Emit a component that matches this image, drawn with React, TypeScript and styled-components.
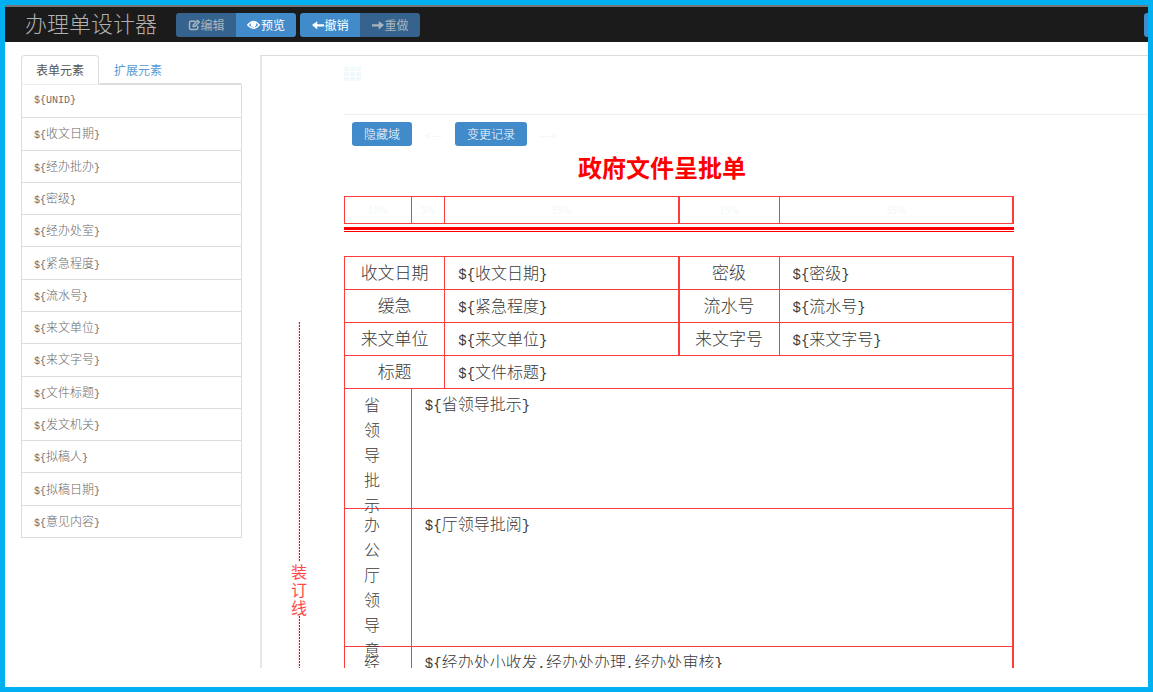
import React from "react";
import styled, { createGlobalStyle } from "styled-components";

const cjk = `"Noto Sans CJK SC", sans-serif`;
const red = "#ff3c3c";

const GlobalStyle = createGlobalStyle`
  * { box-sizing: border-box; }
  html, body, #root { height: 100%; margin: 0; }
  body { background: #fff; font-family: ${cjk}; font-size: 12px; color: #555; }
  button { font-family: inherit; margin: 0; cursor: pointer; }
`;

const Frame = styled.div`
  height: 100%;
  min-height: 320px;
  display: flex;
  flex-direction: column;
  border: 5px solid #00b0f0;
  overflow: hidden;
`;

const Header = styled.header`
  display: flex;
  flex: none;
  align-items: center;
  height: 37px;
  border-top: 2px solid #777;
  background: #1b1b1b;
`;

const Brand = styled.h1`
  margin: 0 19px 0 20px;
  padding-bottom: 4px;
  font-size: 22px;
  line-height: 31px;
  font-weight: 300;
  color: #b0b0b0;
  white-space: nowrap;
`;

const ButtonGroup = styled.div`
  display: flex;
  flex: none;
  margin-right: 4px;
  border-radius: 3px;
  overflow: hidden;
`;

const ToolButton = styled.button`
  display: flex;
  align-items: center;
  justify-content: center;
  gap: 1px;
  width: 60px;
  height: 24px;
  padding: 0;
  border: 0;
  background: #428bca;
  color: #fff;
  font-size: 12px;
  line-height: 16px;

  &:disabled { background: #35638d; color: #a9b4bf; cursor: default; }
`;

const CutOffGroup = styled(ButtonGroup)`
  width: 4px;
  margin: 0 0 0 auto;
  border-radius: 3px 0 0 3px;
`;

const Body = styled.div`
  flex: 1;
  min-height: 0;
  display: flex;
  gap: 18px;
  padding: 13px 0 19px 16px;
`;

const Sidebar = styled.aside`
  flex: none;
  width: 221px;
`;

const Tabs = styled.div`
  display: flex;
  height: 30px;
`;

const Tab = styled.button<{ $active?: boolean }>`
  flex: ${(p) => (p.$active ? "none" : "1")};
  width: 78px;
  padding: 0 ${(p) => (p.$active ? 0 : 14)}px;
  border: 1px solid ${(p) => (p.$active ? "#ddd" : "transparent")};
  border-bottom: ${(p) => (p.$active ? "1px solid #eee" : "2px solid #ddd")};
  border-radius: ${(p) => (p.$active ? "4px 4px 0 0" : "0")};
  background: #fff;
  color: ${(p) => (p.$active ? "#555" : "#5a9bd2")};
  font-size: 12px;
  line-height: 18px;
  text-align: ${(p) => (p.$active ? "center" : "left")};
`;

const ElementList = styled.ul`
  display: grid;
  grid-auto-rows: 1fr;
  height: 453px;
  margin: 0;
  padding: 0;
  list-style: none;
  border: 1px solid #ddd;
  border-top: 0;
`;

const ElementItem = styled.li`
  display: flex;
  align-items: center;
  padding: 0 0 1px 12px;
  color: #6a6a6a;
  border-top: 1px solid #ddd;

  &:first-child { border-top: 0; }
`;

const TokenText = styled.span<{ $large?: boolean }>`
  font-family: "Liberation Mono", ${cjk};
  font-size: ${(p) => (p.$large ? 14 : 10)}px;
  white-space: nowrap;
`;

const TokenName = styled.span<{ $large?: boolean }>`
  font-size: ${(p) => (p.$large ? 16 : 12)}px;
  font-weight: 300;
`;

const Canvas = styled.main`
  flex: 1;
  min-width: 0;
  display: flex;
  overflow: hidden;
  border-left: 2px solid #e8e8e8;
  border-top: 1px solid #ddd;
`;

const BindingMargin = styled.div`
  flex: none;
  display: flex;
  flex-direction: column;
  align-items: center;
  width: 74px;
  padding-top: 266px;
`;

const DottedLine = styled.div<{ $grow?: boolean }>`
  width: 2px;
  height: 240px;
  flex: ${(p) => (p.$grow ? "1" : "none")};
  border-left: 1px solid #ffe0e0;
  background: repeating-linear-gradient(#f00 0 2px, #fff 2px 3px);
`;

const BindingText = styled.div`
  flex: none;
  width: 17px;
  font-size: 16px;
  line-height: 18px;
  color: #ff4848;
  text-align: center;
`;

const Sheet = styled.div`
  flex: 1;
  min-width: 0;
  margin-left: 8px;
`;

const GridHandle = styled.div`
  height: 59px;
  padding-top: 11px;
  border-bottom: 1px solid #f0f0f0;

  svg { display: block; }
`;

const Actions = styled.div`
  display: flex;
  align-items: center;
  height: 24px;
  margin: 7px 0 8px 8px;
`;

const ActionButton = styled.button`
  height: 24px;
  padding: 0 12px;
  border: 0;
  border-radius: 3px;
  background: #428bca;
  color: #fff;
  font-size: 12px;
  font-weight: 300;
  line-height: 16px;
`;

const Arrow = styled.span`
  width: 43px;
  font-size: 12px;
  color: #f5f5f5;
  text-align: center;
`;

const Paper = styled.div`
  width: 100%;
  max-width: 670px;
`;

const FormTitle = styled.h2`
  margin: 0 0 16px;
  padding-right: 34px;
  font-size: 24px;
  line-height: 26px;
  font-weight: 700;
  color: #f00;
  text-align: center;
`;

const FormTable = styled.table`
  width: 100%;
  table-layout: fixed;
  border-collapse: collapse;
`;

const Col = styled.col<{ $share: number }>`
  width: ${(p) => p.$share}%;
`;

const Cell = styled.td<{ $heavy?: boolean }>`
  height: 33px;
  padding: 0 0 2px 13px;
  border: 1px solid ${red};
  border-right-width: ${(p) => (p.$heavy ? 2 : 1)}px;
  color: #3a3a3a;
`;

const HeadCell = styled(Cell)`
  height: 27px;
  padding: 0;
  font-size: 10px;
  line-height: 14px;
  color: #f2f8f8;
  text-align: center;
`;

const LabelCell = styled(Cell)`
  padding: 0 0 2px;
  font-size: 17px;
  line-height: 24px;
  font-weight: 300;
  text-align: center;
`;

const TallCell = styled(Cell)<{ $height: number }>`
  height: ${(p) => p.$height}px;
  padding-top: 4px;
  line-height: 24px;
  vertical-align: top;
`;

const TallLabelCell = styled(TallCell)`
  padding: 3px 0 0 19px;
`;

const VerticalText = styled.div<{ $height: number }>`
  width: 16px;
  height: ${(p) => p.$height}px;
  font-size: 16px;
  line-height: 25px;
  font-weight: 300;
`;

const DoubleRule = styled.div`
  height: 5px;
  margin: 3px 0 24px;
  border-top: 3px solid #f00;
  border-bottom: 1px solid #f00;
`;

const Token = ({ name, large }: { name: string; large?: boolean }) => (
  <TokenText $large={large}>
    {"${"}
    {name === "UNID"
      ? name
      : name.split(",").map((part, i) => (
          <React.Fragment key={part}>
            {i > 0 && ","}
            <TokenName $large={large}>{part}</TokenName>
          </React.Fragment>
        ))}
    {"}"}
  </TokenText>
);

const icon = { width: 12, height: 12, viewBox: "0 0 16 16", fill: "none", stroke: "currentColor" };

const EditIcon = () => (
  <svg {...icon} strokeWidth="2">
    <path d="M10 3H4Q2 3 2 5v7q0 2 2 2h7q2 0 2-2v-3" />
    <path d="M7 10V8l6-6 2 2-6 6z" />
  </svg>
);
const EyeIcon = () => (
  <svg {...icon} width={13} height={10} viewBox="0 0 18 14" strokeWidth="2">
    <path d="M1 7q8-10 16 0q-8 9-16 0z" />
    <circle cx="9" cy="6" r="3" fill="currentColor" />
  </svg>
);
const ArrowIcon = ({ right }: { right?: boolean }) => (
  <svg {...icon} fill="currentColor" stroke="none">
    <path d={right ? "M16 8 9 3v4H0v3h9v4z" : "M0 8 7 3v4h9v3H7v4z"} />
  </svg>
);

const elements = [
  "UNID", "收文日期", "经办批办", "密级", "经办处室", "紧急程度", "流水号",
  "来文单位", "来文字号", "文件标题", "发文机关", "拟稿人", "拟稿日期", "意见内容",
];

const shares = [10, 5, 35, 15, 35];

const pairs = [
  ["收文日期", "收文日期", "密级", "密级"],
  ["缓急", "紧急程度", "流水号", "流水号"],
  ["来文单位", "来文单位", "来文字号", "来文字号"],
];

const opinions = [
  { label: "省领导批示", token: "省领导批示", height: 120 },
  { label: "办公厅领导意", token: "厅领导批阅", height: 138 },
  { label: "经", token: "经办处小收发,经办处办理,经办处审核", height: 120 },
];

const Columns = () => (
  <colgroup>
    {shares.map((share, i) => (
      <Col key={i} $share={share} />
    ))}
  </colgroup>
);

export default function App() {
  return (
    <Frame>
      <GlobalStyle />
      <Header>
        <Brand>办理单设计器</Brand>
        <ButtonGroup>
          <ToolButton disabled><EditIcon />编辑</ToolButton>
          <ToolButton><EyeIcon />预览</ToolButton>
        </ButtonGroup>
        <ButtonGroup>
          <ToolButton><ArrowIcon />撤销</ToolButton>
          <ToolButton disabled><ArrowIcon right />重做</ToolButton>
        </ButtonGroup>
        <CutOffGroup>
          <ToolButton aria-label="更多" />
        </CutOffGroup>
      </Header>
      <Body>
        <Sidebar>
          <Tabs role="tablist">
            <Tab role="tab" aria-selected $active>表单元素</Tab>
            <Tab role="tab" aria-selected={false}>扩展元素</Tab>
          </Tabs>
          <ElementList>
            {elements.map((name) => (
              <ElementItem key={name}><Token name={name} /></ElementItem>
            ))}
          </ElementList>
        </Sidebar>
        <Canvas>
          <BindingMargin>
            <DottedLine />
            <BindingText>装订线</BindingText>
            <DottedLine $grow />
          </BindingMargin>
          <Sheet>
            <GridHandle>
              <svg width="18" height="14" viewBox="0 0 18 14" fill="#f1f9fb">
                {[0, 5, 10].map((y) =>
                  [0, 6, 12].map((x) => <rect key={`${x}-${y}`} x={x} y={y} width="5" height="4" />)
                )}
              </svg>
            </GridHandle>
            <Actions>
              <ActionButton>隐藏域</ActionButton>
              <Arrow>&lt;—</Arrow>
              <ActionButton>变更记录</ActionButton>
              <Arrow>—&gt;</Arrow>
            </Actions>
            <Paper>
              <FormTitle>政府文件呈批单</FormTitle>
              <FormTable>
                <Columns />
                <tbody>
                  <tr>
                    {shares.map((share, i) => (
                      <HeadCell key={i} $heavy={i === 2 || i === 4}>{share}%</HeadCell>
                    ))}
                  </tr>
                </tbody>
              </FormTable>
              <DoubleRule />
              <FormTable>
                <Columns />
                <tbody>
                  {pairs.map(([a, b, c, d]) => (
                    <tr key={a}>
                      <LabelCell colSpan={2}>{a}</LabelCell>
                      <Cell $heavy><Token name={b} large /></Cell>
                      <LabelCell>{c}</LabelCell>
                      <Cell $heavy><Token name={d} large /></Cell>
                    </tr>
                  ))}
                  <tr>
                    <LabelCell colSpan={2}>标题</LabelCell>
                    <Cell colSpan={3} $heavy><Token name="文件标题" large /></Cell>
                  </tr>
                  {opinions.map(({ label, token, height }) => (
                    <tr key={label}>
                      <TallLabelCell $height={height}>
                        <VerticalText $height={height - 10}>{label}</VerticalText>
                      </TallLabelCell>
                      <TallCell colSpan={4} $height={height} $heavy>
                        <Token name={token} large />
                      </TallCell>
                    </tr>
                  ))}
                </tbody>
              </FormTable>
            </Paper>
          </Sheet>
        </Canvas>
      </Body>
    </Frame>
  );
}
